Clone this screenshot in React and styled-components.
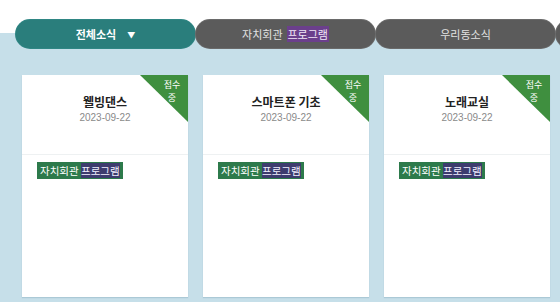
import styled, { createGlobalStyle } from "styled-components";

const GlobalStyles = createGlobalStyle`
  html, body {
    margin: 0;
    padding: 0;
    background: #ffffff;
    font-family: "Noto Sans CJK KR", "Noto Sans", sans-serif;
  }
`;

const tabs = [
  { label: "전체소식", active: true },
  { label: "자치회관", mark: "프로그램" },
  { label: "우리동소식" },
  { label: "" },
];

const programs = [
  { title: "웰빙댄스", date: "2023-09-22" },
  { title: "스마트폰 기초", date: "2023-09-22" },
  { title: "노래교실", date: "2023-09-22" },
];

function App() {
  return (
    <Page>
      <GlobalStyles />
      <TabBar>
        {tabs.map((t, i) => (
          <Tab key={i} $active={t.active}>
            {t.label}
            {t.mark && <TabMark>{t.mark}</TabMark>}
            {t.active && <Caret>▼</Caret>}
          </Tab>
        ))}
      </TabBar>

      <CardRow>
        {programs.map((p) => (
          <Card key={p.title}>
            <Ribbon>
              <RibbonText>
                <RibbonLine>접수</RibbonLine>
                <RibbonLine>중</RibbonLine>
              </RibbonText>
            </Ribbon>
            <CardHead>
              <Title>{p.title}</Title>
              <DateText>{p.date}</DateText>
            </CardHead>
            <CardBody>
              <Tag>
                자치회관 <TagMark>프로그램</TagMark>
              </Tag>
            </CardBody>
          </Card>
        ))}
      </CardRow>
    </Page>
  );
}

const Page = styled.main`
  width: 560px;
  height: 302px;
  overflow: hidden;
  background: linear-gradient(#ffffff 0, #ffffff 33px, #c6dfe9 33px);
`;

const TabBar = styled.nav`
  display: flex;
  gap: 1px;
  padding: 20px 0 0 16px;
  white-space: nowrap;
`;

const Tab = styled.div`
  flex: 0 0 179px;
  height: 28px;
  box-sizing: border-box;
  border-radius: 14px;
  display: flex;
  align-items: center;
  justify-content: center;
  gap: 3px;
  font-size: 11px;
  font-weight: ${({ $active }) => ($active ? 700 : 400)};
  color: ${({ $active }) => ($active ? "#ffffff" : "#e2e2e2")};
  background: ${({ $active }) => ($active ? "#2a7e7c" : "#5b5b5b")};
  box-shadow: 0 0 0 1px ${({ $active }) => ($active ? "#2f8684" : "#6a6a6a")};
`;

const TabMark = styled.span`
  background: #6b3f8c;
  color: #f0e6f7;
  padding: 0 1px;
  margin-left: 1px;
`;

const Caret = styled.span`
  font-size: 8px;
  margin-left: 8px;
`;

const CardRow = styled.section`
  display: flex;
  gap: 15px;
  padding: 27px 0 0 22px;
`;

const Card = styled.article`
  position: relative;
  flex: 0 0 166px;
  height: 222px;
  background: #ffffff;
  box-shadow: 0 1px 1px rgba(120, 160, 180, 0.35);
  overflow: hidden;
`;

const Ribbon = styled.div`
  position: absolute;
  top: 0;
  right: 0;
  width: 48px;
  height: 47px;
  background: #3f8f3f;
  clip-path: polygon(0 0, 100% 0, 100% 100%);
`;

const RibbonText = styled.div`
  position: absolute;
  top: 3px;
  right: 4px;
  width: 24px;
  display: flex;
  flex-direction: column;
  align-items: center;
  color: #ffffff;
`;

const RibbonLine = styled.span`
  font-size: 9px;
  line-height: 13px;
`;

const CardHead = styled.div`
  height: 80px;
  box-sizing: border-box;
  padding-top: 19px;
  border-bottom: 1px solid #eef1f2;
  text-align: center;
`;

const Title = styled.h3`
  margin: 0;
  font-size: 12px;
  line-height: 16px;
  font-weight: 700;
  color: #222222;
`;

const DateText = styled.p`
  margin: 1px 0 0;
  font-family: "Liberation Sans", Arial, sans-serif;
  font-size: 10px;
  line-height: 14px;
  color: #8a8a8a;
`;

const CardBody = styled.div`
  padding: 1px 0 0 15px;
`;

const Tag = styled.span`
  display: inline-block;
  background: #2d7a4b;
  color: #ffffff;
  font-size: 10.5px;
  line-height: 17px;
  padding: 0 3px;
  white-space: nowrap;
`;

const TagMark = styled.span`
  background: #3d3c6e;
  color: #f2f0ff;
`;

export default App;
